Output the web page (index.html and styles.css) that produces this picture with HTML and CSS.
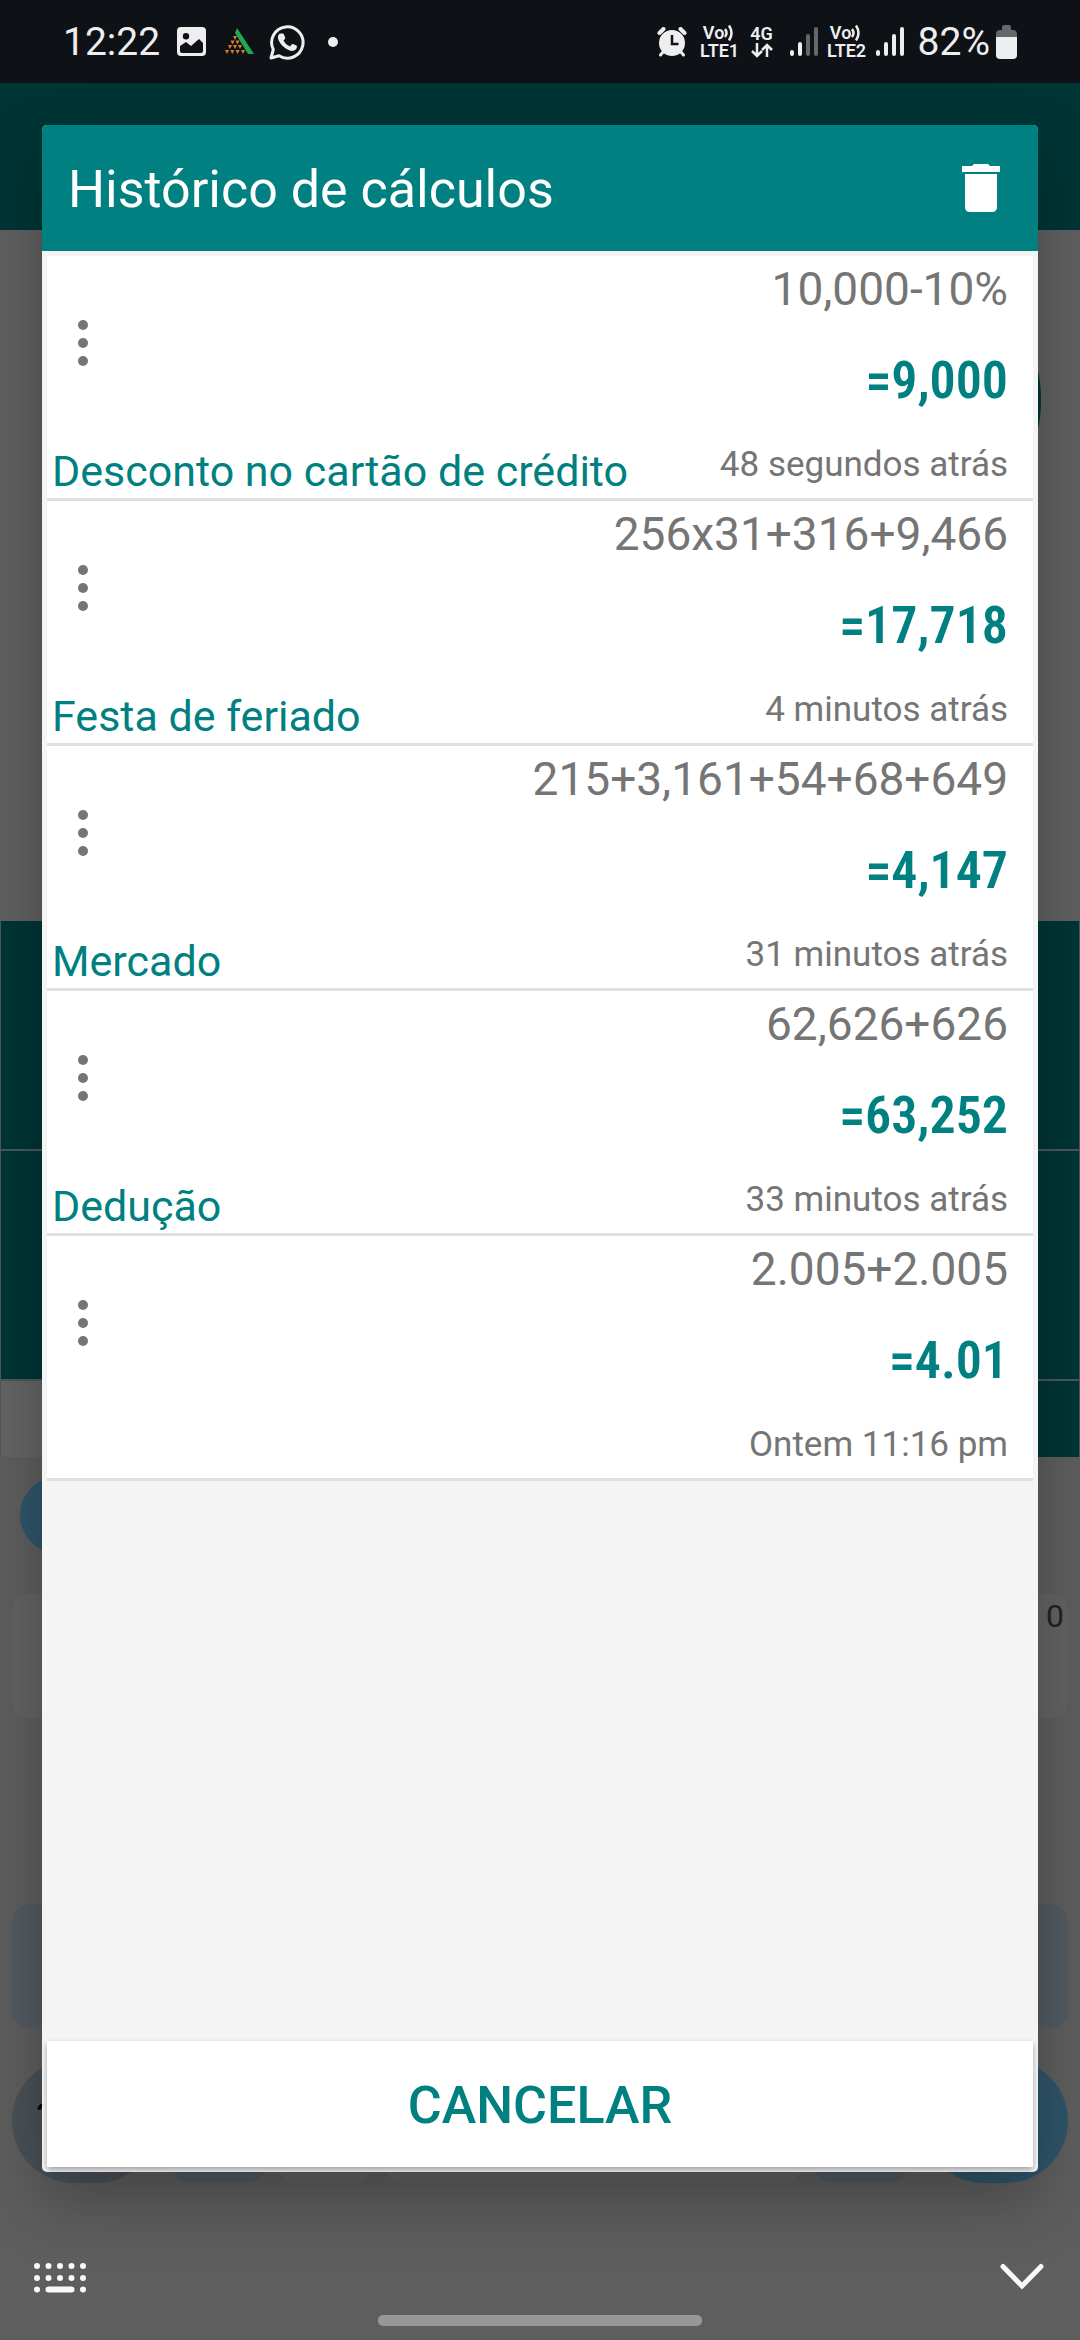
FILE: index.html
```html
<!DOCTYPE html>
<html lang="pt-BR">
<head>
<meta charset="utf-8">
<meta name="viewport" content="width=device-width, initial-scale=1">
<title>Histórico de cálculos</title>
<link rel="stylesheet" href="styles.css">
</head>
<body>
<div class="screen">
  <header class="status">
    <div class="status-group">
      <span class="clock">12:22</span>
      <svg class="ic-photo" width="29" height="29" viewBox="0 0 29 29"><path fill="#eee" fill-rule="evenodd" d="M4 0h21a4 4 0 0 1 4 4v21a4 4 0 0 1-4 4H4a4 4 0 0 1-4-4V4a4 4 0 0 1 4-4zM9 6a3.2 3.2 0 1 0 0 6.400a3.200 3.200 0 0 0 0-6.400zM3 19v5q0 2 2 2h19q2 0 2-2v-8l-4-4-8 7-5-4z"/></svg>
      <svg class="ic-tri" width="29" height="27" viewBox="0 0 29 27"><path fill="#1fa950" d="M12 0l17 26h-6L10 5z"/><path fill="#e07b28" d="M8 8h4l-2 4zM5.500 12.500h4l-2 4zM10.500 12.500h4l-2 4zM3 17h4l-2 4zM8 17h4l-2 4zM13 17h4l-2 4zM0 22h4l-2 4zM5.300 22h4l-2 4zM10.600 22h4l-2 4zM16 22h4l-2 4z"/></svg>
      <svg class="ic-wa" width="36" height="36" viewBox="0 0 36 36"><path fill="none" stroke="#eee" stroke-width="3" stroke-linejoin="round" d="M2 34l2.300-8.500A15.700 15.700 0 1 1 10 31.800z"/><path fill="#eee" d="M11.500 9.500h2.300q.7 0 1 .8l1.400 3.300q.3.600-.2 1.200l-1.500 1.900q2.200 4.200 6.400 5.900l2-2.300q.5-.6 1.200-.3l3.300 1.600q.7.300.6 1.100-.5 4-5 4.200-4.300-.2-9.300-4.900-5-5.200-4.800-9.300.2-2 1.600-3 .4-.2 1-.2z"/></svg>
      <i class="dot"></i>
    </div>
    <div class="status-group">
      <svg class="ic-alarm" width="30" height="30" viewBox="0 0 30 30"><g stroke="#eee" stroke-width="4" stroke-linecap="round"><path d="M2.500 6l4-4M27.500 6l-4-4"/><path stroke-width="3" d="M6 25l-2.500 3M24 25l2.500 3"/></g><circle cx="15" cy="16" r="13" fill="#eee"/><path fill="none" stroke="#0e1116" stroke-width="2.500" d="M15 8v9h6.500"/></svg>
      <span class="net"><span class="net-line">Vo<svg width="12" height="17" viewBox="0 0 12 17"><path fill="none" stroke="#eee" stroke-width="2.500" d="M1 5q3 4 0 8M5 1.500q5 7.500 0 15"/></svg></span><span>LTE1</span></span>
      <span class="net net-4g"><span>4G</span><svg width="22" height="15" viewBox="0 0 22 15"><path fill="none" stroke="#eee" stroke-width="2.500" d="M6 0v12M1 8l5 5 5-5M16 14V3M11 7l5-5 5 5"/></svg></span>
      <svg class="ic-sig" width="28" height="31" viewBox="0 0 28 31"><g stroke="#eee" stroke-width="4" stroke-linecap="round"><path d="M2 26v2M10 18v10"/><path stroke="#65686b" d="M18 10v18M26 3v25"/></g></svg>
      <span class="net net-2"><span class="net-line">Vo<svg width="12" height="17" viewBox="0 0 12 17"><path fill="none" stroke="#eee" stroke-width="2.500" d="M1 5q3 4 0 8M5 1.500q5 7.500 0 15"/></svg></span><span>LTE2</span></span>
      <svg class="ic-sig2" width="28" height="31" viewBox="0 0 28 31"><path stroke="#eee" stroke-width="4" stroke-linecap="round" d="M2 26v2M10 18v10M18 10v18M26 3v25"/></svg>
      <span class="battery">82%</span>
      <svg class="ic-bat" width="21" height="34" viewBox="0 0 21 34"><path fill="#65686b" d="M6 5V2q0-2 2-2h5q2 0 2 2v3h2q4 0 4 4v5H0V9q0-4 4-4z"/><path fill="#eee" d="M0 12h21v18q0 4-4 4H4q-4 0-4-4z"/></svg>
    </div>
  </header>

  <div class="app" aria-hidden="true">
    <div class="app-bar"></div>
    <div class="app-display"><i class="bubble"></i></div>
    <div class="app-pad"><i></i><i></i><i class="pad-last"></i></div>
  </div>

  <div class="keyboard" aria-hidden="true">
    <div class="kb-tools"><i></i></div>
    <div class="kb-row kb-first"><span>0</span></div>
    <div class="kb-row kb-mid"></div>
    <div class="kb-row kb-third"></div>
    <div class="kb-bottom"><i class="pill">?123</i><i class="blue"></i><i></i><i></i><i class="blue"></i><i class="pill enter"></i></div>
  </div>

  <footer class="nav">
    <button class="nav-btn" aria-label="Trocar teclado"><svg width="52" height="30" viewBox="0 0 52 30" fill="#fafafa"><circle cx="3" cy="3" r="3"/><circle cx="14.500" cy="3" r="3"/><circle cx="26" cy="3" r="3"/><circle cx="37.500" cy="3" r="3"/><circle cx="49" cy="3" r="3"/><circle cx="3" cy="15" r="3"/><circle cx="14.500" cy="15" r="3"/><circle cx="26" cy="15" r="3"/><circle cx="37.500" cy="15" r="3"/><circle cx="49" cy="15" r="3"/><circle cx="3" cy="26.500" r="3"/><rect x="11.500" y="23.500" width="29" height="6" rx="3"/><circle cx="49" cy="26.500" r="3"/></svg></button>
    <button class="nav-btn" aria-label="Ocultar teclado"><svg width="44" height="28" viewBox="0 0 44 28"><path fill="none" stroke="#fafafa" stroke-width="5" stroke-linecap="round" d="M3 3.500l19 19.500 19-19.500"/></svg></button>
    <i class="handle"></i>
  </footer>

  <section class="dialog" role="dialog" aria-labelledby="title">
    <header class="dialog-head">
      <h1 id="title">Histórico de cálculos</h1>
      <button class="trash" aria-label="Limpar histórico"><svg width="38" height="48" viewBox="0 0 38 48" fill="#fff"><path d="M0 2h10l2-2h14l2 2h10v6H0zM3 10h32v33q0 5-5 5H8q-5 0-5-5z"/></svg></button>
    </header>
    <ul class="list">
      <li class="row">
        <button class="menu" aria-label="Opções"><i></i><i></i><i></i></button>
        <span class="label">Desconto no cartão de crédito</span>
        <div class="calc"><span class="expr">10,000-10%</span><strong class="result">=9,000</strong><time class="when">48 segundos atrás</time></div>
      </li>
      <li class="row">
        <button class="menu" aria-label="Opções"><i></i><i></i><i></i></button>
        <span class="label">Festa de feriado</span>
        <div class="calc"><span class="expr">256x31+316+9,466</span><strong class="result">=17,718</strong><time class="when">4 minutos atrás</time></div>
      </li>
      <li class="row">
        <button class="menu" aria-label="Opções"><i></i><i></i><i></i></button>
        <span class="label">Mercado</span>
        <div class="calc"><span class="expr">215+3,161+54+68+649</span><strong class="result">=4,147</strong><time class="when">31 minutos atrás</time></div>
      </li>
      <li class="row">
        <button class="menu" aria-label="Opções"><i></i><i></i><i></i></button>
        <span class="label">Dedução</span>
        <div class="calc"><span class="expr">62,626+626</span><strong class="result">=63,252</strong><time class="when">33 minutos atrás</time></div>
      </li>
      <li class="row">
        <button class="menu" aria-label="Opções"><i></i><i></i><i></i></button>
        <div class="calc"><span class="expr">2.005+2.005</span><strong class="result">=4.01</strong><time class="when">Ontem 11:16 pm</time></div>
      </li>
    </ul>
    <button class="cancel">CANCELAR</button>
  </section>
</div>
</body>
</html>
```
FILE: styles.css
```css
* { box-sizing: border-box; }
body { margin: 0; background: #5e5e5e; font-family: Roboto, "Liberation Sans", sans-serif; }
button { border: 0; padding: 0; background: none; font: inherit; cursor: pointer; }
svg { display: block; flex: none; }
i { font-style: normal; }

.screen { position: relative; min-height: 100vh; display: flex; flex-direction: column; overflow: hidden; }

/* status bar */
.status { position: relative; z-index: 2; height: 83px; padding: 0 63px; display: flex; justify-content: space-between; background: #0e1116; color: #eee; }
.status-group { display: flex; align-items: center; }
.clock, .battery { font-size: 39px; line-height: 44px; }
.ic-photo { margin-left: 17px; }
.ic-tri { margin-left: 19px; }
.ic-wa { margin-left: 15px; }
.dot { width: 10px; height: 10px; margin-left: 23px; border-radius: 50%; background: #eee; }
.net { display: flex; flex-direction: column; align-items: center; width: 40px; margin-left: 13px; font-size: 18px; line-height: 18px; font-weight: 600; }
.net-line { display: flex; }
.net-4g { width: 24px; margin-left: 10px; }
.ic-sig { margin-left: 16px; }
.net-2 { margin-left: 9px; }
.ic-sig2 { margin-left: 9px; }
.battery { margin-left: 14px; }
.ic-bat { margin-left: 6px; }

/* dimmed calculator behind the dialog */
.app { flex: 1; display: flex; flex-direction: column; }
.app-bar { height: 147px; background: #003535; }
.app-display { position: relative; flex: 1; background: #606060; }
.bubble { position: absolute; top: 126px; right: 39px; width: 60px; height: 88px; border-radius: 12px / 44px; background: #003535; }
.app-pad { display: grid; grid-template-rows: 228px 228px 76px; gap: 2px; padding: 0 1px; background: #4c5858; }
.app-pad i { background: #003535; }
.app-pad .pad-last { background: linear-gradient(90deg, #646464 50%, #003535 50%); }

/* dimmed keyboard */
.keyboard { display: flex; flex-direction: column; padding: 0 12px; background: #5e5e5e; }
.kb-tools { height: 137px; padding: 19px 8px; }
.kb-tools i { display: block; width: 78px; height: 78px; border-radius: 50%; background: #2f5569; }
.kb-row { height: 124px; margin-bottom: 31px; border-radius: 18px; }
.kb-first { padding: 2px 4px; background: #636363; text-align: right; font-size: 32px; line-height: 40px; color: #222; }
.kb-third { background: #525a61; }
.kb-bottom { display: grid; grid-template-columns: 146px 93px 93px 1fr 93px 146px; gap: 14px; }
.kb-bottom i { height: 124px; border-radius: 18px; background: #636363; }
.kb-bottom .blue { background: #525a64; }
.kb-bottom .pill { border-radius: 62px; background: #495157; padding-left: 24px; font-size: 38px; line-height: 118px; color: #000; }
.kb-bottom .enter { background: #2f5569; }

.nav { position: relative; z-index: 2; height: 157px; padding: 78px 36px 0 34px; display: flex; justify-content: space-between; align-items: flex-start; }
.nav-btn { padding-top: 2px; }
.handle { position: absolute; bottom: 14px; left: 35%; right: 35%; height: 11px; border-radius: 5px; background: #979797; }

/* history dialog */
.dialog { position: absolute; z-index: 1; top: 125px; right: 42px; bottom: 168px; left: 42px; display: flex; flex-direction: column; overflow: hidden; border-radius: 5px; background: #f4f4f4; box-shadow: 0 28px 64px rgba(0, 0, 0, .28); }
.dialog-head { height: 126px; padding: 0 38px 0 26px; display: flex; align-items: center; justify-content: space-between; background: #008080; color: #fff; }
.dialog-head h1 { margin: 0; padding-top: 4px; font-size: 52px; line-height: 60px; font-weight: 400; }
.list { flex: 1; margin: 5px 5px 0; padding: 0; list-style: none; }
.row { display: grid; grid-template-columns: auto 1fr; grid-template-rows: 1fr auto; min-height: 245px; border-bottom: 3px solid #e0e0e0; background: #fff; }
.menu { grid-area: 1 / 1; justify-self: start; width: 71px; height: 174px; display: flex; flex-direction: column; align-items: center; justify-content: center; gap: 8px; }
.menu i { width: 10px; height: 10px; border-radius: 50%; background: #757575; }
.label { grid-area: 2 / 1; padding: 0 0 2px 5px; font-size: 43px; line-height: 50px; color: #008080; }
.calc { grid-area: 1 / 2 / 3 / 3; display: flex; flex-direction: column; gap: 30px; align-items: flex-end; padding: 1px 25px 9px 0; color: #757575; }
.expr { font-size: 46px; line-height: 64px; }
.result { font-family: "Roboto Condensed", Roboto, sans-serif; font-size: 52px; line-height: 60px; font-weight: 600; color: #008080; }
.when { font-size: 35px; line-height: 48px; }
.cancel { margin: 0 5px 5px; height: 126px; padding-top: 4px; background: #fff; color: #008080; font-size: 52px; line-height: 60px; font-weight: 500; box-shadow: 0 3px 6px rgba(0, 0, 0, .35); }
```
